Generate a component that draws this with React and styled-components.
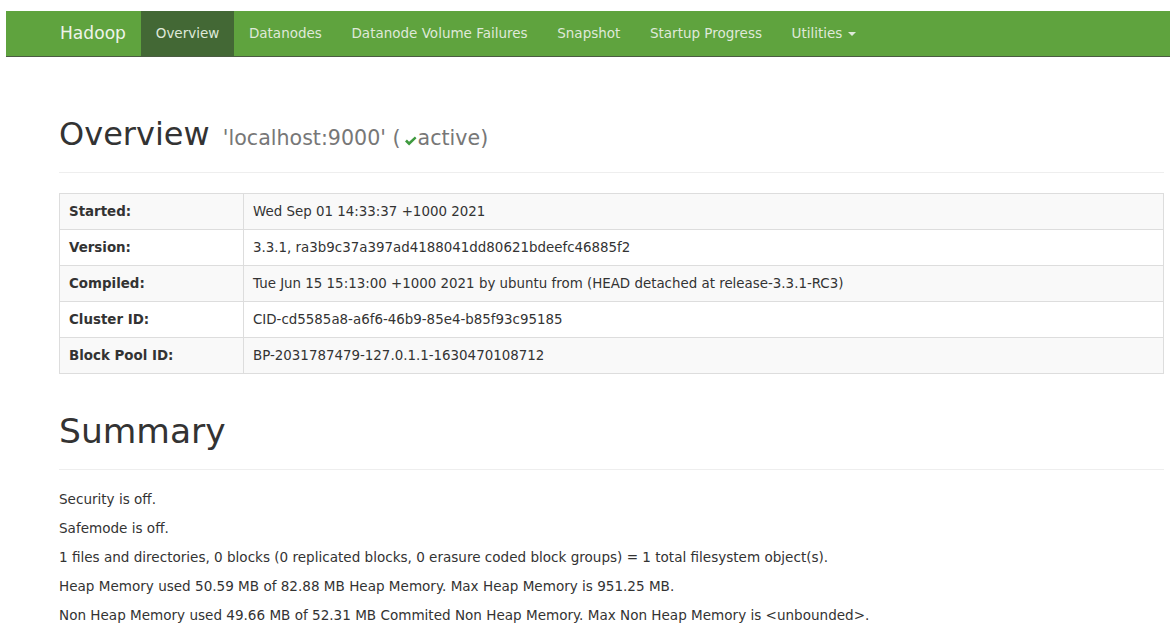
import React from "react";
import styled, { createGlobalStyle } from "styled-components";

const GlobalStyle = createGlobalStyle`
  html, body {
    margin: 0;
    padding: 0;
    background: #fff;
  }
  body {
    font-family: "DejaVu Sans", "Liberation Sans", sans-serif;
    font-size: 13.55px;
    line-height: 19px;
    color: #333;
  }
  * { box-sizing: border-box; }
`;

const Navbar = styled.nav`
  margin: 11px 0 0 6px;
  height: 46px;
  background: #5fa33e;
  border-bottom: 1px solid #4a5c42;
  display: flex;
  align-items: stretch;
  padding-left: 39px;
`;

const Brand = styled.a`
  display: flex;
  align-items: center;
  padding: 0 15px;
  font-size: 17.1px;
  color: #eef3ea;
  text-decoration: none;
`;

const NavList = styled.ul`
  display: flex;
  list-style: none;
  margin: 0;
  padding: 0;
  font-size: 13.5px;
`;

const NavItem = styled.li`
  display: flex;
  background: ${(p) => (p.$active ? "#436835" : "transparent")};
`;

const NavLink = styled.a`
  display: flex;
  align-items: center;
  gap: 6px;
  padding: 0 14.8px;
  color: #dfe9d9;
  text-decoration: none;
`;

const Caret = styled.span`
  width: 0;
  height: 0;
  border-left: 4px solid transparent;
  border-right: 4px solid transparent;
  border-top: 4px solid #dfe9d9;
  margin-top: 1px;
`;

const Main = styled.main`
  padding: 0 6px 0 59px;
`;

const PageHeader = styled.div`
  margin-top: ${(p) => p.$top}px;
  padding-bottom: ${(p) => p.$bottom}px;
  border-bottom: 1px solid #eee;
  margin-bottom: 20px;
`;

const Heading = styled.h1`
  margin: 0;
  font-weight: 400;
  font-size: ${(p) => p.$size}px;
  line-height: 1.1;
  color: #333;
`;

const Small = styled.small`
  margin-left: 3px;
  font-size: 20.6px;
  color: #777;
  font-weight: 400;
`;

const Check = styled.svg`
  display: inline-block;
  width: 13px;
  height: 10px;
  margin: 0 1px 0 3px;
  vertical-align: -1px;
`;

const Table = styled.table`
  width: 100%;
  border-collapse: collapse;
  border: 1px solid #ddd;
  margin-bottom: 39px;
  font-size: 13.4px;
`;

const Row = styled.tr`
  background: ${(p) => (p.$striped ? "#f9f9f9" : "#fff")};
`;

const Th = styled.th`
  width: 184px;
  text-align: left;
  font-weight: 700;
  padding: 8px 9px;
  line-height: 19px;
  border-top: 1px solid #ddd;
  border-right: 1px solid #ddd;
`;

const Td = styled.td`
  padding: 8px 9px;
  line-height: 19px;
  border-top: 1px solid #ddd;
`;

const Para = styled.p`
  margin: 0 0 10px;
  line-height: 19px;
`;

const navItems = [
  { label: "Overview", active: true },
  { label: "Datanodes" },
  { label: "Datanode Volume Failures" },
  { label: "Snapshot" },
  { label: "Startup Progress" },
  { label: "Utilities", dropdown: true },
];

const overview = [
  ["Started:", "Wed Sep 01 14:33:37 +1000 2021"],
  ["Version:", "3.3.1, ra3b9c37a397ad4188041dd80621bdeefc46885f2"],
  [
    "Compiled:",
    "Tue Jun 15 15:13:00 +1000 2021 by ubuntu from (HEAD detached at release-3.3.1-RC3)",
  ],
  ["Cluster ID:", "CID-cd5585a8-a6f6-46b9-85e4-b85f93c95185"],
  ["Block Pool ID:", "BP-2031787479-127.0.1.1-1630470108712"],
];

const summary = [
  "Security is off.",
  "Safemode is off.",
  "1 files and directories, 0 blocks (0 replicated blocks, 0 erasure coded block groups) = 1 total filesystem object(s).",
  "Heap Memory used 50.59 MB of 82.88 MB Heap Memory. Max Heap Memory is 951.25 MB.",
  "Non Heap Memory used 49.66 MB of 52.31 MB Commited Non Heap Memory. Max Non Heap Memory is <unbounded>.",
];

function OkIcon() {
  return (
    <Check viewBox="0 0 13 10" aria-hidden="true">
      <path
        d="M1 5.4 L2.9 3.6 L5.1 5.8 L10.9 0.4 L12.5 2.2 L5.1 9.4 Z"
        fill="#3f9a3f"
      />
    </Check>
  );
}

export default function App() {
  return (
    <>
      <GlobalStyle />
      <Navbar>
        <Brand href="#">Hadoop</Brand>
        <NavList>
          {navItems.map((item) => (
            <NavItem key={item.label} $active={item.active}>
              <NavLink href="#">
                {item.label}
                {item.dropdown && <Caret />}
              </NavLink>
            </NavItem>
          ))}
        </NavList>
      </Navbar>
      <Main>
        <PageHeader $top={60} $bottom={20}>
          <Heading $size={32}>
            Overview{" "}
            <Small>
              'localhost:9000' (
              <OkIcon />
              active)
            </Small>
          </Heading>
        </PageHeader>
        <Table>
          <tbody>
            {overview.map(([k, v], i) => (
              <Row key={k} $striped={i % 2 === 0}>
                <Th>{k}</Th>
                <Td>{v}</Td>
              </Row>
            ))}
          </tbody>
        </Table>
        <PageHeader $top={0} $bottom={18}>
          <Heading $size={34.5}>Summary</Heading>
        </PageHeader>
        {summary.map((line) => (
          <Para key={line}>{line}</Para>
        ))}
      </Main>
    </>
  );
}
